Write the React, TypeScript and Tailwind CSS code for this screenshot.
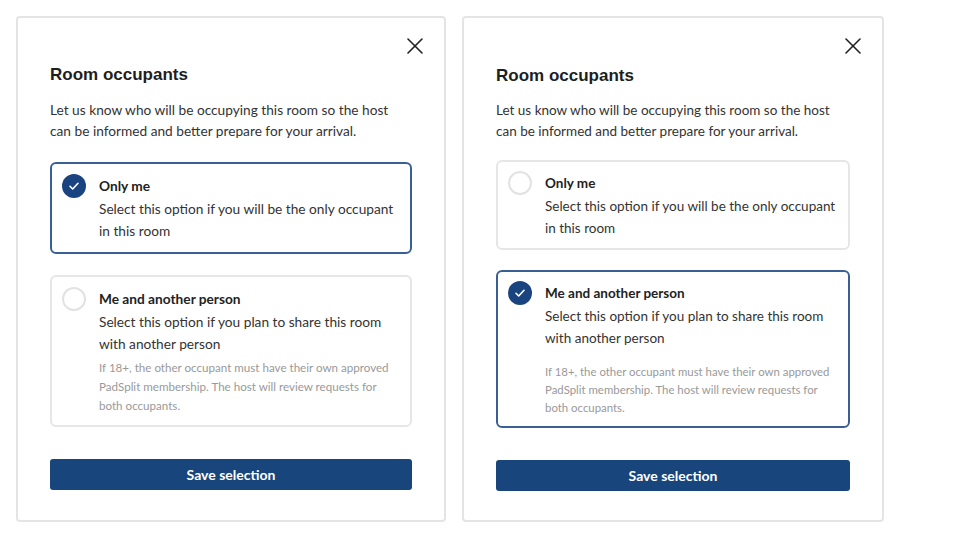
import React from 'react'

type Variant = 'a' | 'b'

interface OptionProps {
  title: string
  desc: string
  note?: string
  checked: boolean
  variant: Variant
}

function CloseIcon() {
  return (
    <svg width="16" height="16" viewBox="0 0 16 16" fill="none" stroke="#222" strokeWidth="1.6" strokeLinecap="round">
      <path d="M1 1 15 15" />
      <path d="M15 1 1 15" />
    </svg>
  )
}

function Radio({ checked }: { checked: boolean }) {
  if (checked) {
    return (
      <div className="w-6 h-6 shrink-0 rounded-full bg-[#1a4480] flex items-center justify-center">
        <svg width="12" height="12" viewBox="0 0 12 12" fill="none" stroke="#fff" strokeWidth="1.6" strokeLinecap="round" strokeLinejoin="round">
          <path d="M2 6.3 4.7 9 10 3.3" />
        </svg>
      </div>
    )
  }
  return <div className="w-6 h-6 shrink-0 rounded-full border-2 border-[#e2e2e2] bg-white" />
}

function Option({ title, desc, note, checked, variant }: OptionProps) {
  const a = variant === 'a'
  return (
    <div
      className={`flex gap-[13px] rounded-[6px] border-2 pl-[10px] pr-[6px] ${a ? 'pt-[10px] pb-[10px]' : 'pt-[9px] pb-[9px]'} ${
        checked ? 'border-[#3a5f95]' : 'border-[#e6e6e6]'
      }`}
    >
      <Radio checked={checked} />
      <div className="flex flex-col">
        <div className={`leading-[24px] font-bold text-[#222] ${a ? 'text-[13.7px]' : 'text-[13.5px]'}`}>{title}</div>
        <div className={`leading-[22px] text-[#333] ${a ? 'text-[13.7px]' : 'text-[13.5px]'}`}>{desc}</div>
        {note && (
          <div
            className={`text-[#999] ${
              a ? 'text-[11.6px] mt-[3px] mr-[14px] leading-[19px]' : 'text-[11.4px] mt-[14px] leading-[18px]'
            }`}
          >
            {note}
          </div>
        )}
      </div>
    </div>
  )
}

function Panel({ variant, selected }: { variant: Variant; selected: 'only' | 'shared' }) {
  const a = variant === 'a'
  return (
    <div
      className={`flex flex-col border-2 border-[#e4e4e4] rounded-[4px] bg-white px-[32px] pt-[20px] ${
        a ? 'w-[430px] pb-[30px]' : 'w-[422px] pb-[29px]'
      }`}
    >
      <div className="flex justify-end -mr-[11px]">
        <button className="w-[16px] h-[16px] flex items-center justify-center">
          <CloseIcon />
        </button>
      </div>
      <h2
        className={`text-[17px] leading-[24px] font-bold text-[#1e1e1e] font-['Liberation_Sans',Arial,sans-serif] ${
          a ? 'mt-[9px]' : 'mt-[10px]'
        }`}
      >
        Room occupants
      </h2>
      <p className={`mt-[12px] leading-[21px] text-[#333] ${a ? 'text-[13.7px]' : 'text-[13.5px]'}`}>
        Let us know who will be occupying this room so the host can be informed and better prepare for your arrival.
      </p>
      <div className={`flex flex-col ${a ? 'mt-[21px] gap-[21px]' : 'mt-[18px] gap-[20px]'}`}>
        <Option
          variant={variant}
          checked={selected === 'only'}
          title="Only me"
          desc="Select this option if you will be the only occupant in this room"
        />
        <Option
          variant={variant}
          checked={selected === 'shared'}
          title="Me and another person"
          desc="Select this option if you plan to share this room with another person"
          note="If 18+, the other occupant must have their own approved PadSplit membership. The host will review requests for both occupants."
        />
      </div>
      <button className="mt-[32px] h-[31px] w-full rounded-[3px] bg-[#17457c] text-white text-[14px] font-bold">
        Save selection
      </button>
    </div>
  )
}

export default function App() {
  return (
    <div className="w-[960px] h-[540px] bg-white flex items-start gap-[16px] pl-[16px] pt-[16px] font-['Lato','Open_Sans',sans-serif]">
      <Panel variant="a" selected="only" />
      <Panel variant="b" selected="shared" />
    </div>
  )
}
